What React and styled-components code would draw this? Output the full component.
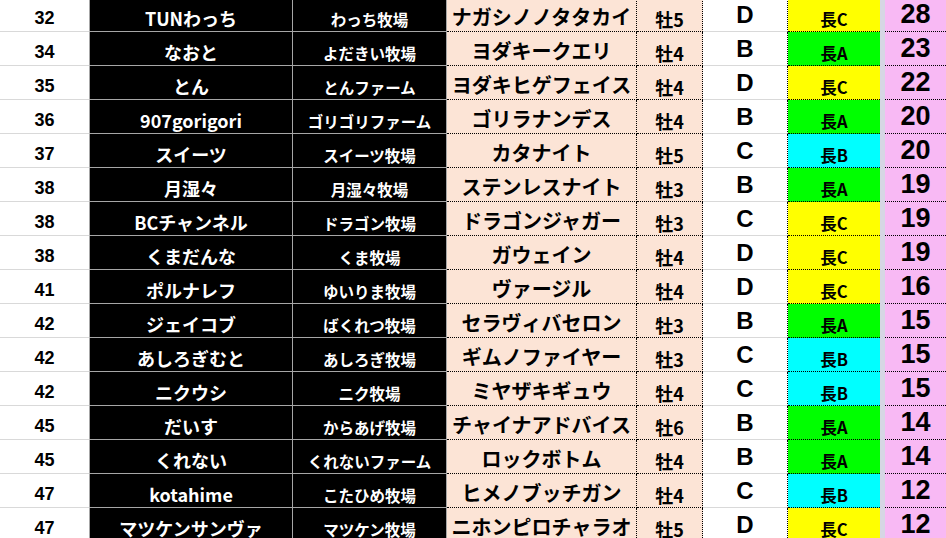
import React from "react";
import styled, { createGlobalStyle, css } from "styled-components";

const Global = createGlobalStyle`
  html, body { margin: 0; padding: 0; background: #ffffff; overflow: hidden; }
  body { width: 946px; height: 538px; }
`;

const JP = `"Noto Sans CJK JP", "Noto Sans", sans-serif`;
const LAT = `"Liberation Sans", "Noto Sans CJK JP", sans-serif`;

const Sheet = styled.div`
  margin-top: -2px;
  display: flex;
  flex-direction: column;
  width: 946px;
`;

const Row = styled.div`
  display: grid;
  grid-template-columns: 90px 203px 154px 190px 66px 85px 92px 5px 61px;
  height: 34px;
`;

const lineStyles = {
  light: css`border-bottom: 1px solid #d9d9d9;`,
  dark: css`border-bottom: 1px solid #a6a6a6;`,
  dotted: css`border-bottom: 1px dotted #000000;`,
};

const Cell = styled.div`
  box-sizing: border-box;
  display: flex;
  align-items: center;
  justify-content: center;
  white-space: nowrap;
  overflow: hidden;
  background: ${(p) => p.$bg || "#ffffff"};
  color: ${(p) => p.$fg || "#000000"};
  font-family: ${(p) => p.$font || JP};
  font-size: ${(p) => p.$size}px;
  font-weight: ${(p) => p.$weight || 700};
  line-height: 1;
  padding-top: ${(p) => p.$shift || 0}px;
  ${(p) => lineStyles[p.$line || "light"]}
  border-right: ${(p) => p.$right || "none"};
`;

const Rank = (props) => (
  <Cell $size={18} $font={LAT} $shift={7} $line="light" $right="1px solid #a6a6a6" {...props} />
);
const Name = (props) => (
  <Cell $bg="#000000" $fg="#ffffff" $size={18} $shift={7} $line="dark" $right="1px solid #a6a6a6" {...props} />
);
const Farm = (props) => (
  <Cell $bg="#000000" $fg="#ffffff" $size={15.5} $shift={10} $line="dark" $right="1px solid #a6a6a6" {...props} />
);
const Horse = (props) => (
  <Cell $bg="#fce4d6" $size={20} $weight={700} $shift={5} $line="dotted" $right="1px dotted #000000" {...props} />
);
const Sex = (props) => (
  <Cell $bg="#fce4d6" $size={18} $shift={8} $line="dotted" $right="1px dotted #000000" {...props} />
);
const Grade = (props) => (
  <Cell $size={24} $font={LAT} $shift={1} $line="light" $right="1px dotted #000000" {...props} />
);
const Choku = (props) => (
  <Cell $size={16.5} $shift={9} $line="dotted" {...props} />
);
const Divider = styled.div`
  background: #d6d6e4;
`;
const Score = (props) => (
  <Cell $bg="#f8b9f4" $size={27} $font={LAT} $shift={0} $line="dotted" {...props} />
);

const chokuColor = { A: "#00ff00", B: "#00ffff", C: "#ffff00" };

const rows = [
  ["32", "TUNわっち", "わっち牧場", "ナガシノノタタカイ", "牡5", "D", "C", "28"],
  ["34", "なおと", "よだきい牧場", "ヨダキークエリ", "牡4", "B", "A", "23"],
  ["35", "とん", "とんファーム", "ヨダキヒゲフェイス", "牡4", "D", "C", "22"],
  ["36", "907gorigori", "ゴリゴリファーム", "ゴリラナンデス", "牡4", "B", "A", "20"],
  ["37", "スイーツ", "スイーツ牧場", "カタナイト", "牡5", "C", "B", "20"],
  ["38", "月湿々", "月湿々牧場", "ステンレスナイト", "牡3", "B", "A", "19"],
  ["38", "BCチャンネル", "ドラゴン牧場", "ドラゴンジャガー", "牡3", "C", "C", "19"],
  ["38", "くまだんな", "くま牧場", "ガウェイン", "牡4", "D", "C", "19"],
  ["41", "ポルナレフ", "ゆいりま牧場", "ヴァージル", "牡4", "D", "C", "16"],
  ["42", "ジェイコブ", "ばくれつ牧場", "セラヴィバセロン", "牡3", "B", "A", "15"],
  ["42", "あしろぎむと", "あしろぎ牧場", "ギムノファイヤー", "牡3", "C", "B", "15"],
  ["42", "ニクウシ", "ニク牧場", "ミヤザキギュウ", "牡4", "C", "B", "15"],
  ["45", "だいす", "からあげ牧場", "チャイナアドバイス", "牡6", "B", "A", "14"],
  ["45", "くれない", "くれないファーム", "ロックボトム", "牡4", "B", "A", "14"],
  ["47", "kotahime", "こたひめ牧場", "ヒメノブッチガン", "牡4", "C", "B", "12"],
  ["47", "マツケンサンヴァ", "マツケン牧場", "ニホンピロチャラオ", "牡5", "D", "C", "12"],
];

export default function App() {
  return (
    <>
      <Global />
      <Sheet>
        {rows.map(([rank, name, farm, horse, sex, grade, choku, score], i) => (
          <Row key={i}>
            <Rank>{rank}</Rank>
            <Name>{name}</Name>
            <Farm>{farm}</Farm>
            <Horse>{horse}</Horse>
            <Sex>{sex}</Sex>
            <Grade>{grade}</Grade>
            <Choku $bg={chokuColor[choku]}>{"長" + choku}</Choku>
            <Divider />
            <Score>{score}</Score>
          </Row>
        ))}
      </Sheet>
    </>
  );
}
